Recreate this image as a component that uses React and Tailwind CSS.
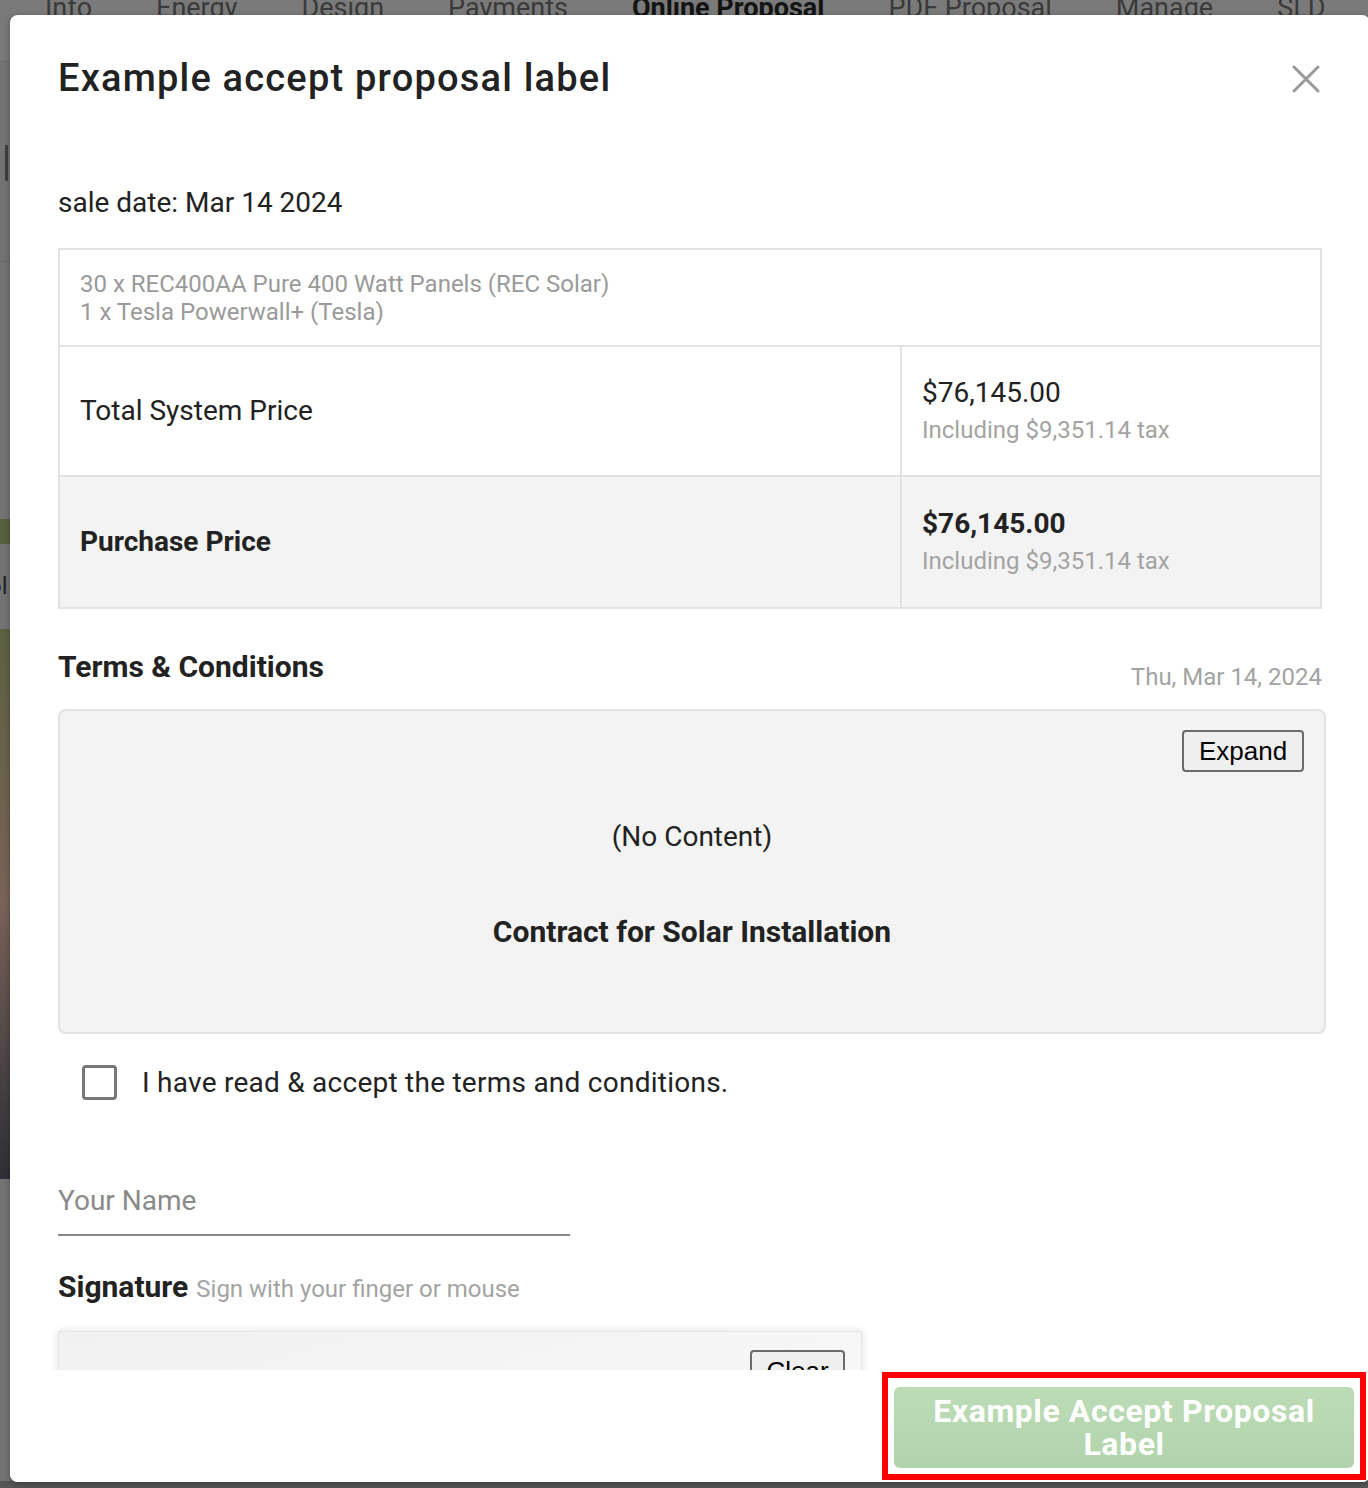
import React, { useState } from "react";

const tabs = ["Info", "Energy", "Design", "Payments", "Online Proposal", "PDF Proposal", "Manage", "SLD"];

const BehindPage = () => (
    <div className="absolute inset-0 bg-[#737373] flex flex-col">
        <div className="h-[62px] shrink-0 bg-[#7a7a7a] border-b border-[#6a6a6a] flex gap-[64px] pl-[45px] overflow-hidden">
            {tabs.map((t) => (
                <div
                    key={t}
                    className={`mt-[-8px] text-[27px] leading-[32px] whitespace-nowrap ${t === "Online Proposal" ? "font-bold text-[#141414]" : "text-[#3a3a3a]"}`}
                >
                    {t}
                </div>
            ))}
        </div>
        <div className="w-[300px] flex flex-col">
            <div className="h-[200px] border-b border-[#666] pl-[5px] pt-[83px]">
                <div className="w-[3px] h-[36px] bg-[#3f3f3f]"></div>
            </div>
            <div className="h-[257px]"></div>
            <div className="h-[25px] bg-[#55603f]"></div>
            <div className="h-[85px] text-[24px] text-[#222] pt-[28px] leading-[28px] -ml-[12px]">ol</div>
            <div className="h-[550px] bg-gradient-to-b from-[#5b6140] via-[#7a6258] to-[#2d3036]"></div>
            <div className="h-[302px]"></div>
        </div>
        <div className="flex-1 bg-[#565656]"></div>
    </div>
);

const PriceRow = ({ label, price, tax, bold, shaded }) => (
    <div className={`grid grid-cols-[840px_1fr] h-[130px] ${shaded ? "bg-[#f3f3f3]" : "border-b-2 border-[#e2e2e2]"}`}>
        <div className={`flex items-center px-[20px] text-[28px] text-[#222] ${bold ? "font-bold" : ""}`}>{label}</div>
        <div className="flex flex-col justify-center px-[20px] border-l-2 border-[#e2e2e2]">
            <div className={`text-[28px] leading-[38px] text-[#222] ${bold ? "font-bold" : ""}`}>{price}</div>
            <div className="text-[24px] leading-[36px] text-[#a3a3a3]">{tax}</div>
        </div>
    </div>
);

const App = () => {
    const [accepted, setAccepted] = useState(false);
    const [name, setName] = useState("");

    return (
        <div className="fixed inset-0 overflow-hidden font-['Roboto',sans-serif]">
            <BehindPage />

            <div className="absolute left-[10px] top-[15px] w-[1360px] h-[1467px] bg-white rounded-[8px] flex flex-col overflow-hidden shadow-[0_2px_6px_rgba(0,0,0,0.3)]">
                <div className="h-[1355px] shrink-0 overflow-hidden px-[48px]">
                    <div className="flex justify-between items-start pt-[41px]">
                        <h1 className="text-[38px] leading-[44px] tracking-[1.2px] font-medium text-[#222]">Example accept proposal label</h1>
                        <button className="mt-[9px] mr-[2px] w-[28px] h-[28px]">
                            <svg viewBox="0 0 28 28" width="28" height="28">
                                <path d="M2 2 L26 26 M26 2 L2 26" stroke="#999" strokeWidth="3" strokeLinecap="round" />
                            </svg>
                        </button>
                    </div>

                    <div className="mt-[87px] text-[28px] leading-[32px] text-[#222]">sale date: Mar 14 2024</div>

                    <div className="mt-[29px] w-[1264px] border-2 border-[#e2e2e2]">
                        <div className="px-[20px] pt-[20px] pb-[19px] border-b-2 border-[#e2e2e2] text-[24px] leading-[28px] text-[#9a9a9a]">
                            <div>30 x REC400AA Pure 400 Watt Panels (REC Solar)</div>
                            <div>1 x Tesla Powerwall+ (Tesla)</div>
                        </div>
                        <PriceRow label="Total System Price" price="$76,145.00" tax="Including $9,351.14 tax" />
                        <PriceRow label="Purchase Price" price="$76,145.00" tax="Including $9,351.14 tax" bold shaded />
                    </div>

                    <div className="mt-[41px] h-[34px] w-[1264px] flex justify-between items-start">
                        <h2 className="text-[30px] leading-[34px] font-bold text-[#222]">Terms &amp; Conditions</h2>
                        <div className="mt-[10px] text-[24px] leading-[34px] text-[#a3a3a3]">Thu, Mar 14, 2024</div>
                    </div>

                    <div className="mt-[25px] w-[1268px] h-[325px] bg-[#f3f3f3] border-2 border-[#e2e2e2] rounded-[8px] flex flex-col items-center pt-[19px] pr-[20px]">
                        <button className="self-end h-[42px] w-[122px] border-2 border-[#6b6b6b] rounded-[4px] bg-[#efefef] text-[26px] text-black font-['Liberation_Sans',Arial,sans-serif]">
                            Expand
                        </button>
                        <div className="mt-[49px] pl-[20px] text-[28px] leading-[32px] text-[#222]">(No Content)</div>
                        <div className="mt-[62px] pl-[20px] text-[30px] leading-[34px] font-bold text-[#222]">Contract for Solar Installation</div>
                    </div>

                    <label className="mt-[31px] ml-[24px] flex items-center gap-[25px] cursor-pointer">
                        <input
                            type="checkbox"
                            checked={accepted}
                            onChange={(e) => setAccepted(e.target.checked)}
                            className="appearance-none w-[35px] h-[35px] border-[3px] border-[#777] rounded-[4px] checked:bg-[#777]"
                        />
                        <span className="text-[28px] leading-[32px] tracking-[0.25px] text-[#222]">I have read &amp; accept the terms and conditions.</span>
                    </label>

                    <input
                        value={name}
                        onChange={(e) => setName(e.target.value)}
                        placeholder="Your Name"
                        className="mt-[75px] block w-[512px] h-[61px] pb-[9px] border-b-2 border-[#888] text-[28px] text-[#222] placeholder:text-[#8a8a8a] outline-none"
                    />

                    <div className="mt-[34px] flex items-baseline gap-[8px]">
                        <span className="text-[30px] leading-[34px] font-bold text-[#222]">Signature</span>
                        <span className="text-[24px] text-[#a3a3a3]">Sign with your finger or mouse</span>
                    </div>

                    <div className="mt-[24px] w-[804px] h-[250px] border border-[#e6e6e6] bg-gradient-to-br from-[#f1f1f1] to-[#fbfbfb] shadow-[0_0_8px_rgba(0,0,0,0.12)] flex justify-end items-start pt-[18px] pr-[16px]">
                        <button className="h-[42px] w-[95px] border-2 border-[#6b6b6b] rounded-[4px] bg-[#efefef] text-[26px] text-black font-['Liberation_Sans',Arial,sans-serif]">
                            Clear
                        </button>
                    </div>
                </div>

                <div className="flex-1 flex justify-end items-start pt-[2px] pr-[4px] bg-white">
                    <div className="w-[484px] h-[108px] border-[6px] border-[#ff0000] pt-[9px] pb-[6px] px-[6px]">
                        <button className="w-full h-full rounded-[6px] bg-gradient-to-b from-[#bcdcb6] to-[#b1d4ac] text-white text-[32px] leading-[33px] tracking-[0.6px] font-bold flex items-center justify-center text-center">
                            Example Accept Proposal<br />Label
                        </button>
                    </div>
                </div>
            </div>
        </div>
    );
};

export default App;
